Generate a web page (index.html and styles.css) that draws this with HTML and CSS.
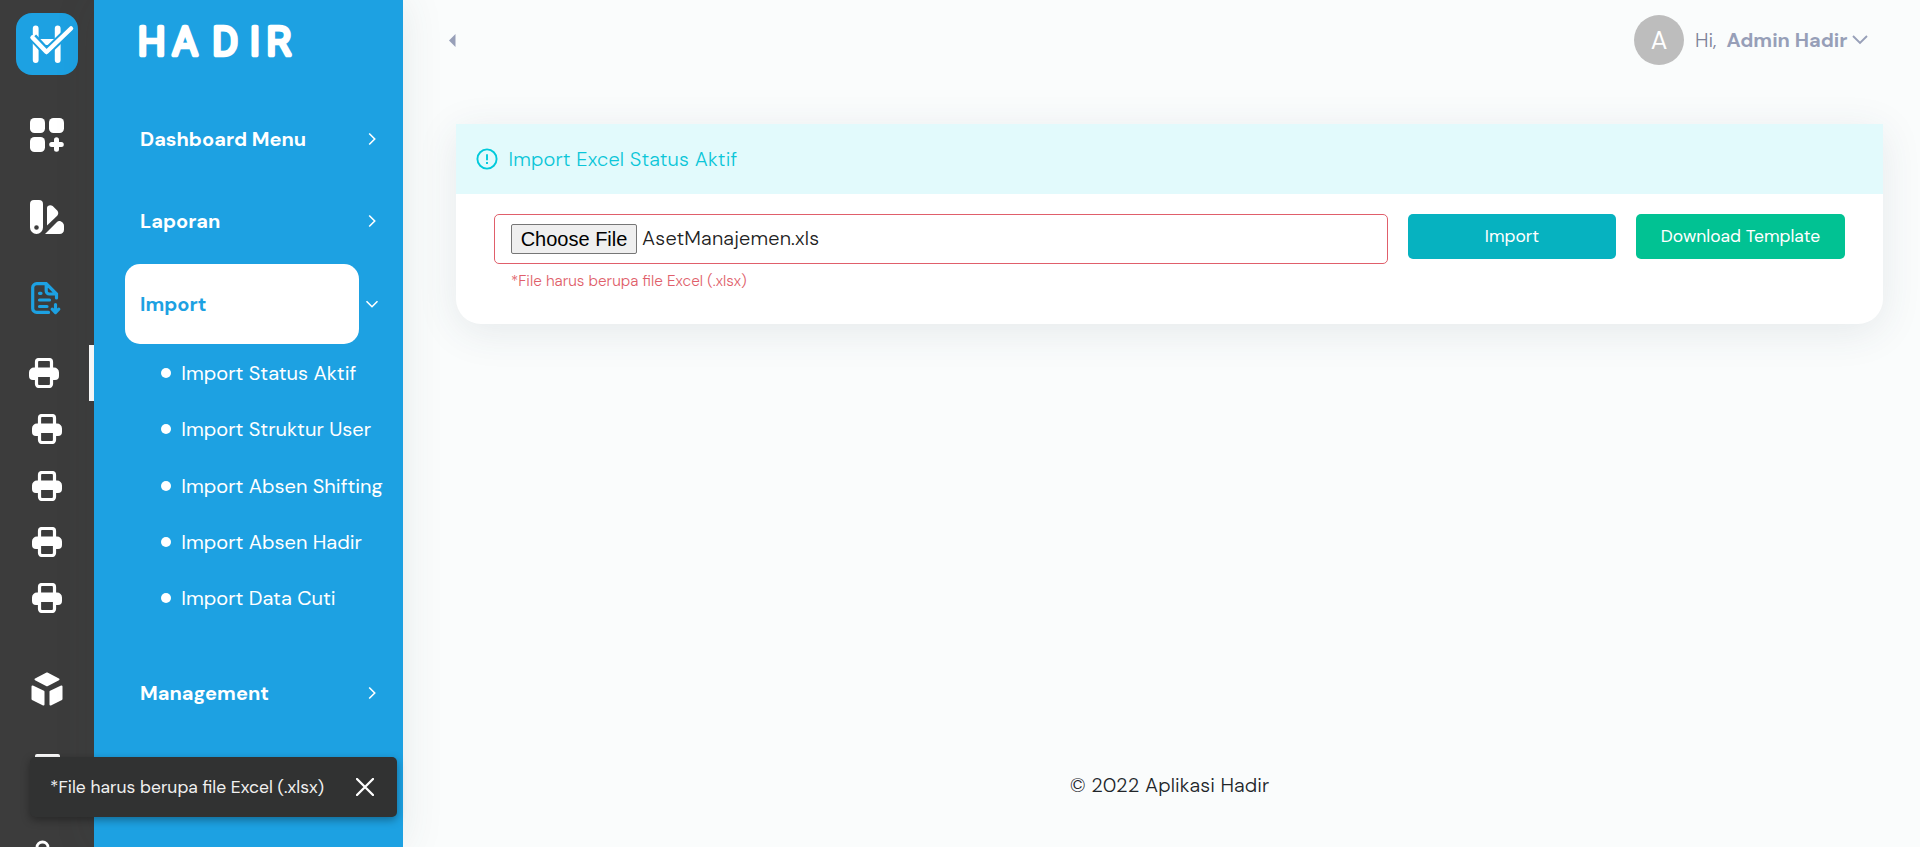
FILE: index.html
```html
<!DOCTYPE html>
<html lang="id">
<head>
<meta charset="utf-8">
<title>Hadir</title>
<link rel="stylesheet" href="styles.css">
</head>
<body>
<svg class="defs" width="0" height="0" aria-hidden="true">
  <symbol id="printer" viewBox="0 0 30 30">
    <path d="M5 9.500h20a5 5 0 0 1 5 5V18a4 4 0 0 1-4 4H4a4 4 0 0 1-4-4v-3.500a5 5 0 0 1 5-5z" fill="#fff"/>
    <path d="M7.500 10.500V4a2.500 2.500 0 0 1 2.500-2.500h10A2.500 2.500 0 0 1 22.500 4v6.500M7.500 17.500V26a2.500 2.500 0 0 0 2.500 2.500h10a2.500 2.500 0 0 0 2.500-2.500v-8.500z" fill="#3c3c3c" stroke="#fff" stroke-width="3.200"/>
    <path d="M6 9.500h18v7H6z" fill="#fff"/>
  </symbol>
  <symbol id="chev" viewBox="0 0 8 14"><path d="M1.200 1.500L6.700 7l-5.500 5.500" fill="none" stroke="#fff" stroke-width="1.600"/></symbol>
</svg>
<div class="app">
  <nav class="rail">
    <svg class="logo" viewBox="0 0 62 62">
      <rect width="62" height="62" rx="16" fill="#1da1e2"/>
      <path d="M19.700 15.500v31.500M41.700 15.500v31.500M24 29h14" stroke="#fff" stroke-width="5.800" stroke-linecap="round"/>
      <path d="M17 24.500l13.500 14.500L55 15.500" fill="none" stroke="#1da1e2" stroke-width="8.500" stroke-linejoin="round"/>
      <path d="M16.500 24.500l14 14.500L55 15.500" fill="none" stroke="#fff" stroke-width="4.500" stroke-linecap="round" stroke-linejoin="round"/>
    </svg>
    <div class="rail-item">
      <svg width="34" height="34" viewBox="0 0 34 34" fill="#fff"><rect width="15" height="15" rx="4.500"/><rect x="19" width="15" height="15" rx="4.500"/><rect y="19" width="15" height="15" rx="4.500"/><path d="M26.500 21.700v9.600M21.700 26.500h9.600" stroke="#fff" stroke-width="5" stroke-linecap="round"/></svg>
    </div>
    <div class="rail-item">
      <svg width="34" height="34" viewBox="0 0 34 34" fill="#fff"><path fill-rule="evenodd" d="M4 0h5a4 4 0 0 1 4 4v23.500a6.500 6.500 0 0 1-13 0V4a4 4 0 0 1 4-4zM6.500 25.200a2.300 2.300 0 1 0 0 4.600 2.300 2.300 0 0 0 0-4.600z"/><path d="M17 7.500c0-2 3.500-3.200 5.700-1.500l4.500 4.500c1.500 1.700 1.300 3.800 0 5.300L17 25.500z"/><path d="M15 34l12-12c1-1 2.500-1.300 4-.500 2 1 3 2.500 3 4.500v3.500c0 2.800-1.700 4.500-4.500 4.500z"/></svg>
    </div>
    <div class="rail-item doc">
      <svg width="34" height="34" viewBox="0 0 34 34" fill="none" stroke="#1da1e2" stroke-width="3.200" stroke-linecap="round"><path d="M18.500 31.400H6.700a4 4 0 0 1-4-4V6.600a4 4 0 0 1 4-4h9.500L26.500 13v4M16.200 3v7a3 3 0 0 0 3 3h7M9.500 12.300h1.500M9.500 19h10M9.500 25.500h7.500M25.500 23.500v7"/><path d="M22.200 28.200l3.300 3.300 3.300-3.300" stroke-linejoin="round"/></svg>
    </div>
    <div class="rail-subs">
      <div class="rail-sub active"><svg width="30" height="30"><use href="#printer"/></svg></div>
      <div class="rail-sub"><svg width="30" height="30"><use href="#printer"/></svg></div>
      <div class="rail-sub"><svg width="30" height="30"><use href="#printer"/></svg></div>
      <div class="rail-sub"><svg width="30" height="30"><use href="#printer"/></svg></div>
      <div class="rail-sub"><svg width="30" height="30"><use href="#printer"/></svg></div>
    </div>
    <div class="rail-item">
      <svg width="32" height="34" viewBox="0 0 32 34" fill="#fff" stroke="#fff" stroke-linejoin="round" stroke-width="2"><path d="M16 1.500l11.500 5.800L16 13.300 4.500 7.300z"/><path d="M1.500 14.500l11 5.200v12.800L1.500 27zM30.500 14.500l-11 5.200v12.800l11-5.500z"/></svg>
    </div>
    <div class="rail-item">
      <svg width="26" height="34" viewBox="0 0 26 34"><rect x="1" width="25" height="34" rx="2" fill="#fff"/></svg>
    </div>
    <div class="rail-item">
      <svg width="34" height="30" viewBox="0 0 34 30" fill="none" stroke="#fff" stroke-width="2.800"><circle cx="12.500" cy="9.500" r="5.500"/></svg>
    </div>
  </nav>
  <aside class="side">
    <svg class="brand" width="180" height="64" viewBox="0 0 180 64"><text y="46.500"><tspan x="3.900">H</tspan><tspan x="38.900">A</tspan><tspan x="78.600">D</tspan><tspan x="115.700">I</tspan><tspan x="132.800">R</tspan></text></svg>
    <div class="menu-row"><span class="menu-label"><b>Dashboard Menu</b></span><svg class="chev"><use href="#chev"/></svg></div>
    <div class="menu-row"><span class="menu-label"><b>Laporan</b></span><svg class="chev"><use href="#chev"/></svg></div>
    <div class="menu-row"><span class="menu-label open"><b>Import</b></span><svg class="chev down"><use href="#chev"/></svg></div>
    <ul class="subs">
      <li><span>Import Status Aktif</span></li>
      <li><span>Import Struktur User</span></li>
      <li><span>Import Absen Shifting</span></li>
      <li><span>Import Absen Hadir</span></li>
      <li><span>Import Data Cuti</span></li>
    </ul>
    <div class="menu-row"><span class="menu-label"><b>Management</b></span><svg class="chev"><use href="#chev"/></svg></div>
  </aside>
  <main class="main">
    <header class="top">
      <svg width="7" height="13" viewBox="0 0 7 13"><path d="M0 6.500L6.500 0v13z" fill="#979fb8"/></svg>
      <div class="user">
        <span class="avatar">A</span><span class="hi">Hi,</span><b class="name">Admin Hadir</b>
        <svg width="16" height="10" viewBox="0 0 16 10"><path d="M1 1l7 7 7-7" fill="none" stroke="#979fb8" stroke-width="1.900"/></svg>
      </div>
    </header>
    <section class="card">
      <div class="card-head">
        <svg width="22" height="22" viewBox="0 0 22 22" fill="none" stroke="#00cadb" stroke-width="1.900"><circle cx="11" cy="11" r="9.600"/><path d="M11 6.200v6M11 14v2"/></svg>
        <span class="title">Import Excel Status Aktif</span>
      </div>
      <div class="card-body">
        <div class="field">
          <div class="file"><span class="choose">Choose File</span><span class="fname">AsetManajemen.xls</span></div>
          <div class="error">*File harus berupa file Excel (.xlsx)</div>
        </div>
        <div class="btn teal">Import</div>
        <div class="btn green">Download Template</div>
      </div>
    </section>
    <footer class="foot">© 2022 Aplikasi Hadir</footer>
  </main>
</div>
<div class="toast">
  <span>*File harus berupa file Excel (.xlsx)</span>
  <svg width="18" height="18" viewBox="0 0 18 18"><path d="M1 1l16 16M17 1L1 17" stroke="#fff" stroke-width="2.300" stroke-linecap="round"/></svg>
</div>
</body>
</html>
```
FILE: styles.css
```css
* { box-sizing: border-box; }
body { margin: 0; height: 847px; overflow: hidden; background: #fafcfc; font-family: "DM Sans", Inter, "Open Sans", sans-serif; font-size: 20px; color: #212529; }
.defs { position: absolute; }
svg { display: block; flex: none; }
span, b { white-space: nowrap; }
.app { display: flex; height: 847px; overflow: hidden; }

.rail { width: 94px; flex: none; background: #3c3c3c; padding-top: 13px; overflow: hidden; }
.logo { width: 62px; height: 62px; margin: 0 0 19px 16px; }
.rail-item { height: 82px; display: flex; align-items: center; justify-content: center; }
.rail-item.doc { height: 81px; padding-bottom: 1px; }
.rail-subs { padding: 6px 0 22px; }
.rail-sub { height: 56.25px; display: flex; align-items: center; justify-content: center; }
.rail-sub.active { border-right: 5px solid #fff; padding-right: 1px; }

.side { width: 309px; flex: none; background: #1da1e2; box-shadow: 0 0 40px rgba(60, 80, 80, .1); padding-top: 8px; z-index: 1; }
.brand { margin: 0 0 25.500px 40px; }
.brand text { font: 300 38.500px Roboto, sans-serif; fill: #fff; stroke: #fff; stroke-width: 4.700px; stroke-linejoin: round; }
.menu-row { height: 82.500px; display: flex; align-items: center; padding-left: 31px; }
.menu-label { width: 234px; height: 80px; padding-left: 15px; border-radius: 15px; display: flex; align-items: center; color: #fff; }
.menu-label.open { background: #fff; color: #1da1e2; }
.chev { width: 8px; height: 14px; margin-left: 8.500px; }
.chev.down { transform: rotate(90deg); }
.subs { list-style: none; margin: 0; padding: 0 0 25.500px 67px; color: #fff; }
.subs li { height: 56.250px; display: flex; align-items: center; gap: 10.300px; }
.subs li::before { content: ""; width: 10px; height: 10px; border-radius: 50%; background: #fff; }

.main { flex: 1; display: flex; flex-direction: column; padding: 15px 37px 0 53px; }
.top { height: 50px; display: flex; align-items: center; justify-content: space-between; margin-left: -7px; padding-right: 15px; }
.user { display: flex; align-items: center; color: #979fb8; }
.avatar { width: 50px; height: 50px; border-radius: 50%; background: #bdbdbd; color: #fff; display: flex; align-items: center; justify-content: center; font-size: 25px; font-weight: 400; margin-right: 11px; }
.hi { width: 31.500px; color: #7e8299; font-weight: 300; }
.name { width: 125.500px; }
.card { margin-top: 59px; height: 200px; background: #fff; border-radius: 0 0 25px 25px; box-shadow: 0 8px 40px rgba(50, 70, 90, .1); }
.card-head { height: 70px; background: #e2fafc; display: flex; align-items: center; padding-left: 20px; gap: 10.500px; color: #0bc6d8; font-weight: 300; }
.title { letter-spacing: .16px; }
.card-body { display: flex; align-items: flex-start; gap: 20px; padding: 20px 38px 0; }
.field { width: 894px; flex: none; }
.file { height: 50px; border: 1px solid #e05f6b; border-radius: 5px; display: flex; align-items: center; padding-left: 16px; gap: 5px; font-weight: 300; color: #212121; }
.fname { letter-spacing: .2px; padding-bottom: 2px; }
.choose { width: 126px; height: 30px; border: 1px solid #767676; border-radius: 2px; background: #efefef; font: 20px/28px "Liberation Sans", Arial, sans-serif; text-align: center; color: #000; }
.error { margin: 7px 0 0 17px; font-size: 15.300px; line-height: 20px; font-weight: 300; color: #e05f6b; }
.btn { flex: none; width: 208px; height: 45px; border-radius: 5px; display: flex; align-items: center; justify-content: center; color: #fff; font-size: 17.500px; padding-bottom: 2px; }
.teal { background: #06b2c0; }
.green { width: 209px; background: #01c293; }
.foot { margin-top: auto; height: 123px; display: flex; justify-content: center; line-height: 123px; font-weight: 300; letter-spacing: .09px; }

.toast { position: absolute; left: 30px; top: 757px; width: 367px; height: 60px; border-radius: 5px; background: #313232; color: #f0f0f0; display: flex; align-items: center; justify-content: space-between; padding: 0 23px 0 20px; font-size: 17.500px; box-shadow: 0 3px 8px rgba(0, 0, 0, .35); z-index: 2; }
```
